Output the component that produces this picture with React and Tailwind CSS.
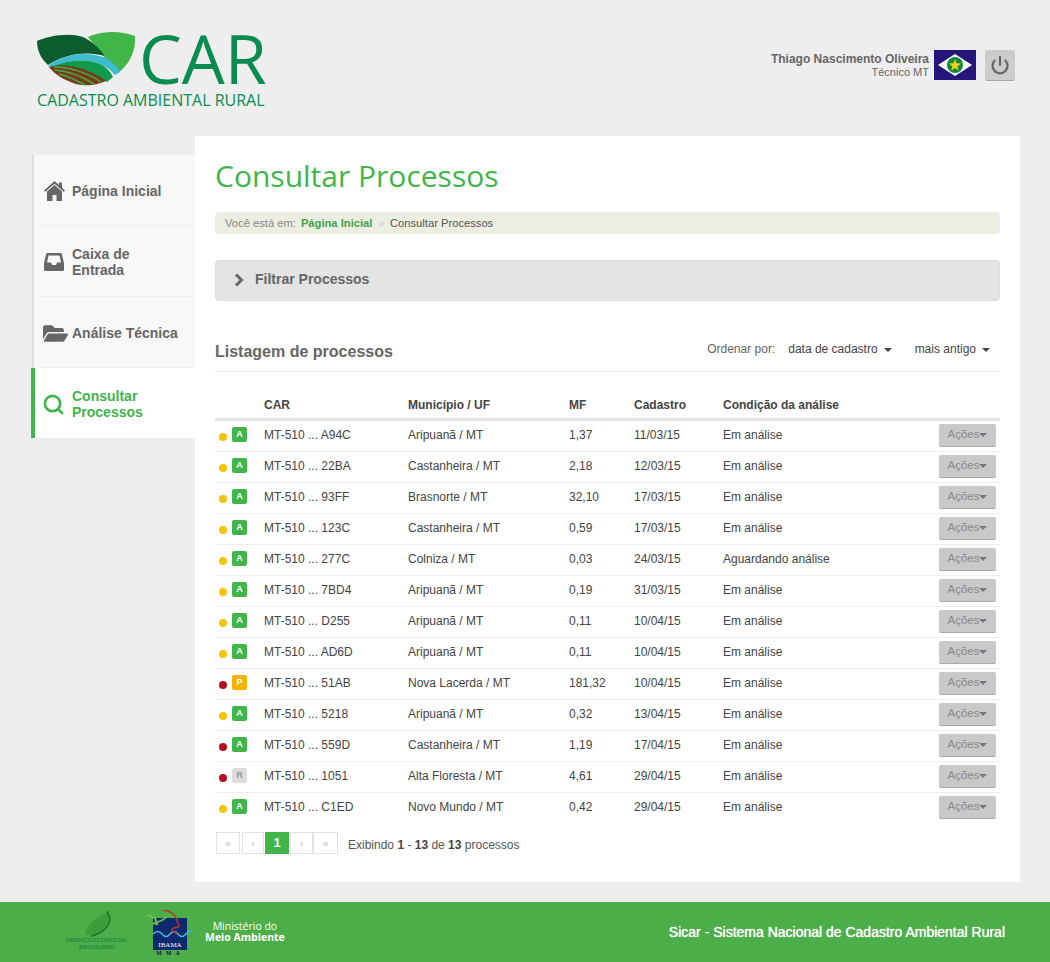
import React from "react";
import { FaFolderOpen } from "react-icons/fa";
import { Power, Search } from "lucide-react";

const rows = [
  ["y", "A", "A94C", "Aripuanã / MT", "1,37", "11/03/15", "Em análise"],
  ["y", "A", "22BA", "Castanheira / MT", "2,18", "12/03/15", "Em análise"],
  ["y", "A", "93FF", "Brasnorte / MT", "32,10", "17/03/15", "Em análise"],
  ["y", "A", "123C", "Castanheira / MT", "0,59", "17/03/15", "Em análise"],
  ["y", "A", "277C", "Colniza / MT", "0,03", "24/03/15", "Aguardando análise"],
  ["y", "A", "7BD4", "Aripuanã / MT", "0,19", "31/03/15", "Em análise"],
  ["y", "A", "D255", "Aripuanã / MT", "0,11", "10/04/15", "Em análise"],
  ["y", "A", "AD6D", "Aripuanã / MT", "0,11", "10/04/15", "Em análise"],
  ["r", "P", "51AB", "Nova Lacerda / MT", "181,32", "10/04/15", "Em análise"],
  ["y", "A", "5218", "Aripuanã / MT", "0,32", "13/04/15", "Em análise"],
  ["r", "A", "559D", "Castanheira / MT", "1,19", "17/04/15", "Em análise"],
  ["r", "R", "1051", "Alta Floresta / MT", "4,61", "29/04/15", "Em análise"],
  ["y", "A", "C1ED", "Novo Mundo / MT", "0,42", "29/04/15", "Em análise"],
];

function Logo() {
  return (
    <div className="w-[235px]">
      <div className="flex items-start">
        <svg width="98" height="56" viewBox="37 28 98 56" className="shrink-0">
          <path d="M88 35C98 30 118 27 135 34C136 48 130 62 118 71L105 56Z" fill="#42b549" />
          <path d="M37 39C48 34 68 30 83 35C93 40 100 47 105 54C85 48 63 53 48 63C41 57 37 48 37 39Z" fill="#0b5c2f" />
          <path d="M48 64C60 54 82 48 103 55C111 58 117 64 120 70L115 73C110 67 106 65 100 62C85 56 66 58 52 66Z" fill="#3dbcd0" />
          <path d="M52 65C66 58 85 56 100 62C106 65 111 70 113 75L107 80C92 70 70 62 52 66Z" fill="#0f9a4c" />
          <path d="M49 65C68 60 92 68 106 79C95 84 85 84 76 82C64 78 55 73 49 65Z" fill="#7a3b1a" />
          <path d="M54 65C70 65 88 71 101 80M55 68C69 69 83 75 94 82M59 72C67 74 76 78 85 83" fill="none" stroke="#3fae49" strokeWidth="1.500" />
        </svg>
        <span className="ml-[4px] text-[68px] leading-[56px] font-medium text-[#0a8c4f] font-['Open_Sans',sans-serif]">CAR</span>
      </div>
      <div className="mt-[5px] text-[16px] leading-[18px] font-medium text-[#0a8c4f] whitespace-nowrap font-['Open_Sans',sans-serif]">
        CADASTRO AMBIENTAL RURAL
      </div>
    </div>
  );
}

function Flag() {
  return (
    <svg width="42" height="30" viewBox="0 0 42 30" className="block">
      <rect width="42" height="30" fill="#24167a" />
      <path d="M4 15L21 4L38 15L21 26Z" fill="#fff" />
      <circle cx="21" cy="15" r="8" fill="#0f8a3c" />
      <path d="M21 9l1.600 4.200 4.500.2-3.500 2.800 1.200 4.300-3.800-2.500-3.800 2.500 1.200-4.300-3.500-2.800 4.500-.2z" fill="#f6d21a" />
    </svg>
  );
}

function HomeIcon() {
  return (
    <svg width="21" height="20" viewBox="0 0 21 20" fill="#666666">
      <path d="M10.500 0L15 4V1.500h3V6.700L21 9.500l-1.300 1.300-9.200-8-9.200 8L0 9.500z" />
      <path d="M10.500 4L18 10.500V20h-5.500v-6h-4v6H3v-9.500z" />
    </svg>
  );
}

function InboxIcon() {
  return (
    <svg width="20" height="20" viewBox="0 0 20 20" fill="#666">
      <path d="M3.500 1h13q1 0 1.300 1L20 11v6.500q0 1.500-1.500 1.500h-17Q0 19 0 17.500V11l2.200-9q.3-1 1.300-1zM4.500 3.500L3 10.500h4l1 2.500h4l1-2.500h4L15.500 3.500z" />
    </svg>
  );
}

function NavItem({ icon, children, active }) {
  return (
    <div
      className={
        active
          ? "h-[70px] flex items-center bg-white border-l-4 border-[#3fb54a] pl-[8px] pt-[2px] text-[#3fb54a]"
          : "h-[71px] flex items-center bg-[#f8f8f8] border-l-2 border-[#dddddd] ml-[1px] pl-[10px] pt-[2px] border-b border-b-[#eeeeee] text-[#666666]"
      }
    >
      <span className="w-[29px] flex shrink-0 items-center">{icon}</span>
      <span className={"text-[14px] leading-[16px] font-bold " + (active ? "" : "-ml-[1px]")}>{children}</span>
    </div>
  );
}

function Row({ d, last }) {
  const [dot, badge, code, city, mf, date, cond] = d;
  return (
    <div className={"grid grid-cols-[49px_144px_161px_65px_89px_1fr_auto] items-center text-[12px] text-[#444444] " + (last ? "h-[30px]" : "h-[31px] border-b border-[#eeeeee]")}>
      <div className="flex items-center pl-[4px]">
        <span className={"w-[8px] h-[8px] rounded-full mt-[1px] " + (dot === "y" ? "bg-[#f5c400]" : "bg-[#b50d22]")} />
        <span
          className={
            "ml-[5px] w-[15px] h-[15px] rounded-[2px] flex items-center justify-center text-[9px] leading-none font-bold -mt-[3px] " +
            (badge === "A" ? "bg-[#3fb54a] text-white" : badge === "P" ? "bg-[#f5b400] text-white" : "bg-[#dddddd] text-[#999999]")
          }
        >
          {badge}
        </span>
      </div>
      <div className="-mt-[2px]">MT-510 ... {code}</div>
      <div className="-mt-[2px]">{city}</div>
      <div className="-mt-[2px]">{mf}</div>
      <div className="-mt-[2px]">{date}</div>
      <div className="-mt-[2px]">{cond}</div>
      <button className="mr-[4px] -mt-[2px] w-[57px] h-[23px] bg-[#c9c9c9] border-b border-[#a8a8a8] rounded-[2px] text-[#888888] text-[11.500px] flex items-center justify-center">
        Ações<span className="w-0 h-0 border-x-[4px] border-x-transparent border-t-[4px] border-t-[#777777]" />
      </button>
    </div>
  );
}

function PageBox({ children, cls }) {
  return (
    <span className={"h-[22px] flex items-center justify-center border border-[#e2e2e2] text-[#bbbbbb] text-[10px] " + cls}>{children}</span>
  );
}

function Caret() {
  return <span className="inline-block ml-[6px] align-middle w-0 h-0 border-x-[4px] border-x-transparent border-t-[4px] border-t-[#444444]" />;
}

export default function App() {
  return (
    <div className="w-[1050px] h-[962px] bg-[#eeeeee] flex flex-col font-['Liberation_Sans',Arial,sans-serif] overflow-hidden">
      <header className="h-[136px] shrink-0 flex justify-between pl-[37px] pr-[35px] pt-[30px]">
        <Logo />
        <div className="flex items-start pt-[20px]">
          <div className="text-right text-[#666666] pt-[3px] mr-[5px]">
            <div className="text-[12px] leading-[13px] font-bold whitespace-nowrap">Thiago Nascimento Oliveira</div>
            <div className="text-[11px] leading-[13px]">Técnico MT</div>
          </div>
          <Flag />
          <button className="ml-[9px] w-[30px] h-[31px] bg-[#cccccc] border-b border-[#aaaaaa] rounded-[2px] flex items-center justify-center">
            <Power size={20} strokeWidth={2.600} color="#666666" />
          </button>
        </div>
      </header>

      <div className="flex items-start pl-[31px]">
        <nav className="w-[164px] shrink-0 mt-[19px]">
          <NavItem icon={<HomeIcon />}>Página Inicial</NavItem>
          <NavItem icon={<InboxIcon />}>Caixa de<br />Entrada</NavItem>
          <NavItem icon={<FaFolderOpen size={25} color="#666666" className="-ml-[1px]" />}>Análise Técnica</NavItem>
          <NavItem active icon={<Search size={23} strokeWidth={2.800} color="#3fb54a" className="-ml-[1px]" />}>Consultar<br />Processos</NavItem>
        </nav>

        <main className="w-[825px] h-[746px] bg-white px-[20px] pt-[20px]">
          <h1 className="text-[30px] leading-[40px] text-[#3fb54a] font-['Open_Sans',sans-serif] font-normal">Consultar Processos</h1>

          <div className="mt-[16px] h-[22px] rounded-[4px] bg-[#eceee2] flex items-center pl-[10px] text-[11.200px] text-[#888888]">
            Você está em:
            <span className="ml-[5px] font-bold text-[#3fa447]">Página Inicial</span>
            <span className="mx-[6px] text-[#cccccc] text-[10px]">»</span>
            <span className="text-[#555555]">Consultar Processos</span>
          </div>

          <div className="mt-[26px] h-[41px] rounded-[4px] bg-[#e4e4e4] border border-[#dddddd] flex items-center pl-[18px] pb-[2px] text-[14px] font-bold text-[#666666]">
            <svg width="10" height="14" viewBox="0 0 10 14" className="mt-[1px]">
              <path d="M2 1.500L7.500 7 2 12.500" fill="none" stroke="#666666" strokeWidth="3" />
            </svg>
            <span className="ml-[11px]">Filtrar Processos</span>
          </div>

          <div className="mt-[30px] h-[41px] flex items-center justify-between border-b border-[#eeeeee]">
            <h2 className="text-[16px] font-bold text-[#666666] mt-[1px]">Listagem de processos</h2>
            <div className="flex items-center text-[12px] text-[#444444] pr-[10px] -mt-[4px]">
              <span className="text-[#666666] mr-[13px]">Ordenar por:</span>
              <span>data de cadastro<Caret /></span>
              <span className="ml-[23px]">mais antigo<Caret /></span>
            </div>
          </div>

          <div className="mt-[17px] grid grid-cols-[49px_144px_161px_65px_89px_1fr] items-center h-[32px] pt-[2px] border-b-[3px] border-[#e2e2e2] text-[12px] font-bold text-[#444444]">
            <div />
            <div>CAR</div>
            <div>Município / UF</div>
            <div>MF</div>
            <div>Cadastro</div>
            <div>Condição da análise</div>
          </div>

          {rows.map((d, i) => <Row key={d[2]} d={d} last={i === rows.length - 1} />)}

          <div className="mt-[9px] flex items-start">
            <div className="flex ml-[1px]">
              <PageBox cls="w-[24px]">«</PageBox>
              <PageBox cls="w-[22px] ml-[2px]">‹</PageBox>
              <span className="w-[24px] h-[22px] ml-[1px] bg-[#3fb54a] text-white text-[13px] font-bold flex items-center justify-center">1</span>
              <PageBox cls="w-[23px] ml-[1px]">›</PageBox>
              <PageBox cls="w-[25px]">»</PageBox>
            </div>
            <span className="ml-[10px] mt-[6px] text-[12px] leading-[14px] text-[#555555]">
              Exibindo <b className="text-[#444444]">1</b> - <b className="text-[#444444]">13</b> de <b className="text-[#444444]">13</b> processos
            </span>
          </div>
        </main>
      </div>

      <footer className="mt-[20px] h-[60px] bg-[#4cae48] flex items-center justify-between pl-[66px] pr-[45px]">
        <div className="flex items-center">
          <div className="w-[62px] flex flex-col items-center -mt-[2px]">
            <svg width="28" height="26" viewBox="0 0 28 26">
              <path d="M2 25C3 14 12 6 25 2C27 12 20 22 8 23C5 23 3 24 2 25Z" fill="#3f9c3a" />
              <path d="M24 0L27 8C26 16 18 23 8 25" fill="none" stroke="#237a2b" strokeWidth="2" />
            </svg>
            <span className="text-[5.800px] leading-[7px] font-bold text-[#1f8a3c] text-center whitespace-nowrap">SERVIÇO FLORESTAL<br />BRASILEIRO</span>
          </div>
          <div className="ml-[17px] flex flex-col items-center mt-[3px]">
            <svg width="50" height="40" viewBox="0 0 50 40">
              <rect x="8" y="8" width="34" height="32" fill="#0e2a6e" />
              <path d="M8 24q5-5 9 0t8 0 8 0 8 0 5-2" fill="none" stroke="#49b8e6" strokeWidth="1.500" />
              <path d="M2 5l8 3 2 6-4-1M12 12q6-1 10-6" fill="none" stroke="#6cc04a" strokeWidth="2" />
              <path d="M17 0q11 1 14 8t3 8-5 2 3 6" fill="none" stroke="#b5362a" strokeWidth="1.500" />
              <text x="25" y="37" textAnchor="middle" fontSize="7" fill="#ffffff" fontFamily="Liberation Serif, serif">IBAMA</text>
            </svg>
            <span className="text-[6px] leading-[7px] font-bold tracking-[4px] text-[#112233] font-['Liberation_Serif',serif]">MMA</span>
          </div>
          <div className="ml-[10px] text-center text-white text-[10.500px] leading-[11px] font-['Open_Sans',sans-serif]">
            Ministério do<br /><b>Meio Ambiente</b>
          </div>
        </div>
        <div className="text-[14px] text-white whitespace-nowrap [text-shadow:0_0_1px_#ffffff]">Sicar - Sistema Nacional de Cadastro Ambiental Rural</div>
      </footer>
    </div>
  );
}
